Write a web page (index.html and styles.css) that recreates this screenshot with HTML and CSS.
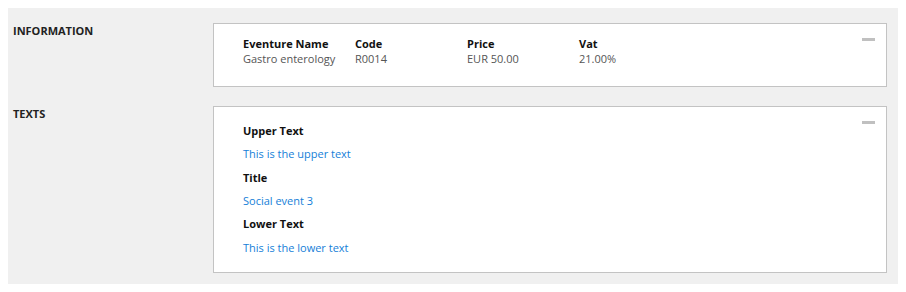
FILE: index.html
```html
<!DOCTYPE html>
<html lang="en">
<head>
  <meta charset="UTF-8">
  <meta name="viewport" content="width=device-width, initial-scale=1.0">
  <title>Event details</title>
  <link rel="stylesheet" href="styles.css">
</head>
<body>
  <div class="panel">
    <div class="section">
      <div class="section-label">INFORMATION</div>
      <div class="box info-box">
        <span class="collapse"></span>
        <div class="info-grid">
          <div class="info-col">
            <div class="info-head">Eventure Name</div>
            <div class="info-value">Gastro enterology</div>
          </div>
          <div class="info-col">
            <div class="info-head">Code</div>
            <div class="info-value">R0014</div>
          </div>
          <div class="info-col">
            <div class="info-head">Price</div>
            <div class="info-value">EUR 50.00</div>
          </div>
          <div class="info-col">
            <div class="info-head">Vat</div>
            <div class="info-value">21.00%</div>
          </div>
        </div>
      </div>
    </div>

    <div class="section">
      <div class="section-label">TEXTS</div>
      <div class="box texts-box">
        <span class="collapse"></span>
        <div class="text-label">Upper Text</div>
        <div class="text-value">This is the upper text</div>
        <div class="text-label">Title</div>
        <div class="text-value">Social event 3</div>
        <div class="text-label">Lower Text</div>
        <div class="text-value">This is the lower text</div>
      </div>
    </div>
  </div>
</body>
</html>
```

FILE: styles.css
```css
body {
  margin: 8px;
  background-color: #fff;
  font-family: 'Open Sans', 'Liberation Sans', sans-serif;
  font-size: 11px;
  color: #222;
}

.panel {
  position: relative;
  width: 890px;
  height: 276px;
  box-sizing: border-box;
  background-color: #f0f0f0;
  padding: 15px 11px 11px 5px;
  display: flex;
  flex-direction: column;
  gap: 19px;
}

/* soft shadow under and right of the panel */
.panel::after {
  content: '';
  position: absolute;
  top: 100%;
  left: 2px;
  right: -4px;
  height: 6px;
  background: linear-gradient(to bottom, rgba(0, 0, 0, 0.2), rgba(0, 0, 0, 0));
}

.panel::before {
  content: '';
  position: absolute;
  top: 3px;
  bottom: 0;
  left: 100%;
  width: 5px;
  background: linear-gradient(to right, rgba(0, 0, 0, 0.12), rgba(0, 0, 0, 0));
}

.section {
  display: flex;
  align-items: flex-start;
}

.section-label {
  width: 200px;
  flex-shrink: 0;
  font-weight: 700;
  line-height: 16px;
  color: #222;
}

.box {
  flex: 1;
  position: relative;
  background-color: #fff;
  border: 1px solid #c3c3c3;
  padding-left: 29px;
}

.collapse {
  position: absolute;
  top: 14px;
  right: 11px;
  width: 13px;
  height: 3px;
  background-color: #c0c0c0;
}

.info-box {
  padding-top: 12px;
  padding-bottom: 20px;
}

.info-grid {
  display: flex;
}

.info-col {
  width: 112px;
  line-height: 15px;
}

.info-head {
  font-weight: 700;
  color: #111;
}

.info-value {
  color: #555;
}

.texts-box {
  padding-top: 12px;
  padding-bottom: 13px;
}

.text-label,
.text-value {
  line-height: 23.33px;
}

.text-label {
  font-weight: 700;
  color: #111;
}

.text-value {
  color: #1580d8;
}
```
